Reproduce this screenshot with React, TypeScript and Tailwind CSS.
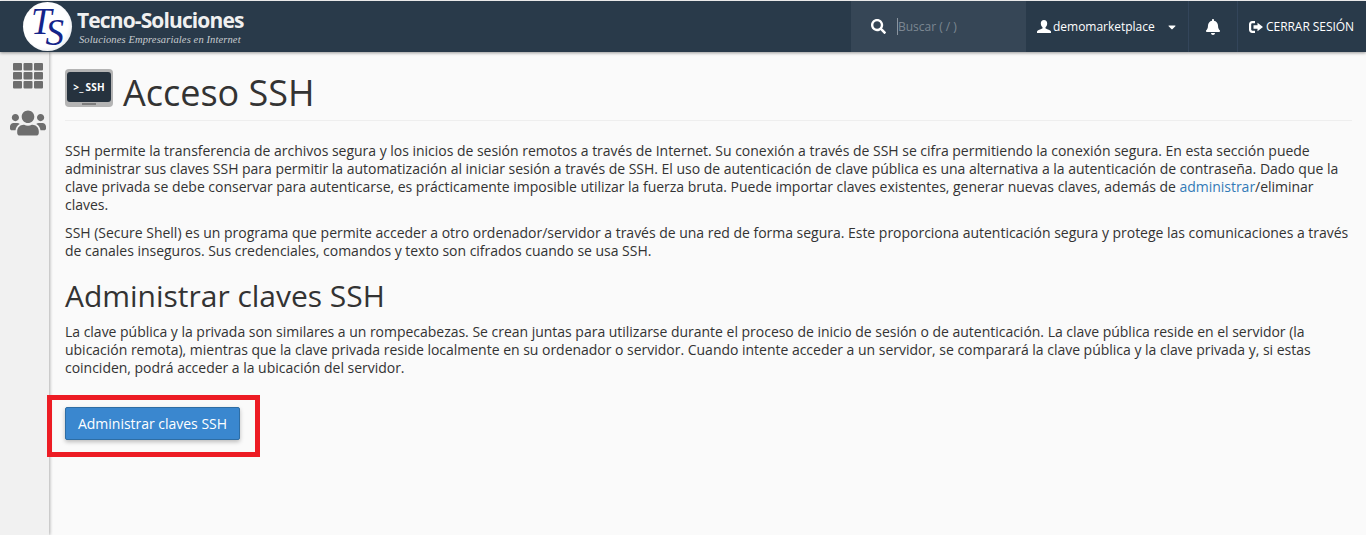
import React from "react";
import { FaSearch, FaBell, FaCaretDown, FaUsers } from "react-icons/fa";

function Logout() {
  return (
    <svg width="14" height="12" viewBox="0 0 14 12" fill="white" className="mr-[3px]">
      <path d="M6 0H3.200C1.400 0 0 1.400 0 3.200v5.600C0 10.600 1.400 12 3.200 12H6V9.800H3.400c-.7 0-1.200-.5-1.200-1.200V3.400c0-.7.5-1.200 1.200-1.200H6V0z" />
      <path d="M8.500 1.800 14 6l-5.500 4.200V7.700H4.500V4.300h4V1.800z" />
    </svg>
  );
}

function Person() {
  return (
    <svg width="14" height="13" viewBox="0 0 14 13" fill="white" className="mr-[2px]">
      <path d="M7 0c2 0 3.200 1.500 3.200 3.400 0 1.500-.7 3-1.700 3.800v1c0 .5 4.500 1.500 5.500 3.200v1.600H0v-1.600c1-1.700 5.500-2.700 5.500-3.200v-1C4.500 6.400 3.800 4.900 3.800 3.400 3.800 1.500 5 0 7 0z" />
    </svg>
  );
}

function Grid() {
  const xs = [0, 10.500, 21];
  const ys = [0, 9, 18];
  return (
    <svg width="30" height="26" viewBox="0 0 30 26" fill="#6e6e6e">
      {ys.map((y) => xs.map((x) => <rect key={`${x}-${y}`} x={x} y={y} width="9" height="7.500" rx="1" />))}
    </svg>
  );
}

export default function App() {
  return (
    <div className="h-[535px] w-[1366px] overflow-hidden bg-[#fafafa] font-['Open_Sans',sans-serif] text-[14px] tracking-[-0.018px] text-[#333]">
      <header className="relative z-10 mt-[1px] flex h-[51px] items-stretch bg-[#293a4a] text-white shadow-[0_1px_3px_rgba(0,0,0,0.4)]">
        <div className="flex w-[851px] items-center pl-[23px]">
          <div className="flex h-[49px] w-[49px] items-center justify-center rounded-full bg-[radial-gradient(circle_at_45%_45%,#ffffff_60%,#c9ced6_100%)] font-['Liberation_Serif',serif] text-[37px] italic leading-none text-[#14248a]">
            <span className="-mt-[10px] -mr-[3px]">T</span>
            <span className="mt-[12px] -ml-[3px]">S</span>
          </div>
          <div className="ml-[5px] flex flex-col">
            <span className="text-[21px] font-bold leading-[26px] tracking-[-0.88px] text-[#f0f0f0]">Tecno-Soluciones</span>
            <span className="ml-[2px] font-['Liberation_Serif',serif] text-[10.500px] italic leading-[13px] tracking-[0.12px] text-[#c8ccd0]">Soluciones Empresariales en Internet</span>
          </div>
        </div>
        <div className="flex w-[175px] items-center bg-[#364656] pl-[20px]">
          <FaSearch className="text-[15px] text-white" />
          <span className="ml-[11px] h-[17px] w-[1px] bg-[#8a949e]" />
          <span className="text-[12px] text-[#7c8792]">Buscar ( / )</span>
        </div>
        <div className="flex w-[163px] items-center border-r border-[#33455a] pl-[11px] text-[12px]">
          <Person />
          <span>demomarketplace</span>
          <FaCaretDown className="ml-[11px] text-[12px]" />
        </div>
        <div className="flex w-[49px] items-center justify-center border-r border-[#33455a]">
          <FaBell className="text-[16px]" />
        </div>
        <div className="flex flex-1 items-center pl-[11px] text-[12px] tracking-[-0.05px]">
          <Logout />
          <span>CERRAR SESIÓN</span>
        </div>
      </header>
      <div className="flex h-[483px]">
        <aside className="flex w-[49px] shrink-0 flex-col items-center bg-[#f1f1f1] pl-[6px] pt-[11px] text-[#6e6e6e] shadow-[1px_0_3px_rgba(0,0,0,0.3)]">
          <Grid />
          <FaUsers className="mt-[16px] text-[36px]" />
        </aside>
        <main className="flex-1 pl-[16px] pr-[14px]">
          <div className="flex h-[69px] items-start border-b border-[#eeeeee] pt-[17px]">
            <div className="flex h-[38px] w-[48px] flex-col items-center rounded-[4px] bg-[#b4b4b4] px-[2px] pt-[3px]">
              <div className="flex h-[30px] w-[44px] items-center justify-center gap-[2px] rounded-[3px] bg-[#26323e] text-[10px] font-bold tracking-[0.2px] text-white">
                <span>&gt;_</span>
                <span>SSH</span>
              </div>
              <div className="mt-[1px] h-[2px] w-[14px] bg-[#7d7d7d]" />
            </div>
            <h1 className="ml-[10px] mt-[4px] text-[36px] font-normal leading-[40px] text-[#333]">Acceso SSH</h1>
          </div>
          <p className="mt-[21px] leading-[18px]">
            SSH permite la transferencia de archivos segura y los inicios de sesión remotos a través de Internet. Su conexión a través de SSH se cifra permitiendo la conexión segura. En esta sección puede administrar sus claves SSH para permitir la automatización al iniciar sesión a través de SSH. El uso de autenticación de clave pública es una alternativa a la autenticación de contraseña. Dado que la clave privada se debe conservar para autenticarse, es prácticamente imposible utilizar la fuerza bruta. Puede importar claves existentes, generar nuevas claves, además de <span className="text-[#337ab7]">administrar</span>/eliminar claves.
          </p>
          <p className="mt-[10px] leading-[18px]">
            SSH (Secure Shell) es un programa que permite acceder a otro ordenador/servidor a través de una red de forma segura. Este proporciona autenticación segura y protege las comunicaciones a través de canales inseguros. Sus credenciales, comandos y texto son cifrados cuando se usa SSH.
          </p>
          <h2 className="mt-[19px] text-[30px] font-normal leading-[33px]">Administrar claves SSH</h2>
          <p className="mt-[11px] leading-[18px]">
            La clave pública y la privada son similares a un rompecabezas. Se crean juntas para utilizarse durante el proceso de inicio de sesión o de autenticación. La clave pública reside en el servidor (la ubicación remota), mientras que la clave privada reside localmente en su ordenador o servidor. Cuando intente acceder a un servidor, se comparará la clave pública y la clave privada y, si estas coinciden, podrá acceder a la ubicación del servidor.
          </p>
          <div className="-ml-[18px] mt-[18px] w-[213px] border-[5px] border-[#ed1c24] pl-[13px] pt-[7px] pb-[12px]">
            <button className="h-[33px] w-[175px] rounded-[2px] border border-[#2e6da4] bg-[#3a87cf] text-[14px] text-white shadow-[0_2px_4px_rgba(0,0,0,0.25)]">Administrar claves SSH</button>
          </div>
        </main>
      </div>
    </div>
  );
}
